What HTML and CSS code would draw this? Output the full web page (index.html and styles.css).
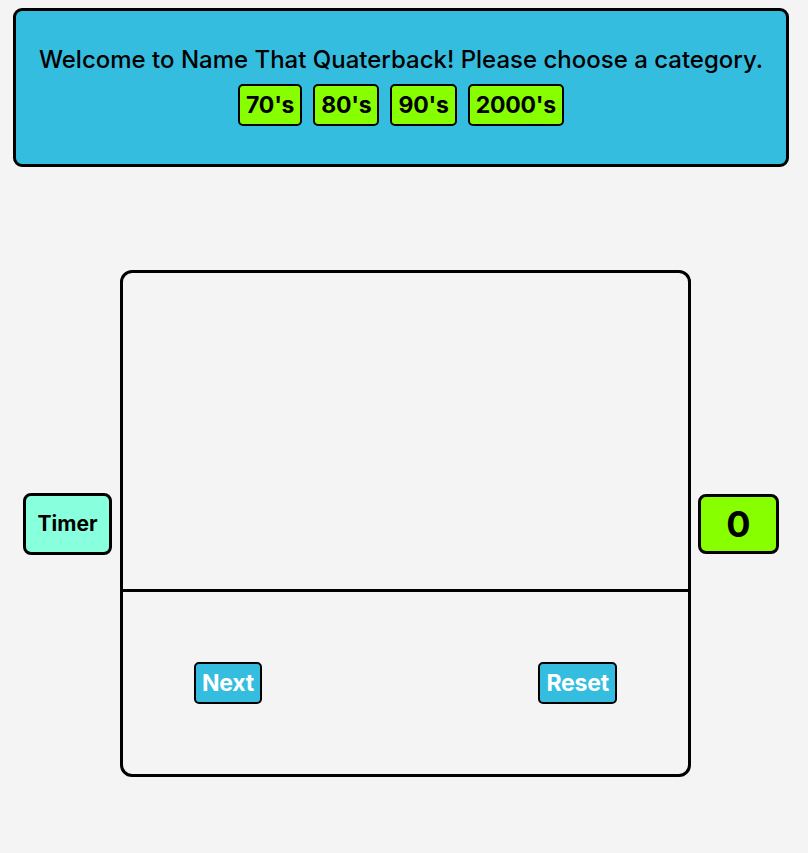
FILE: index.html
```html
<!DOCTYPE html>
<html>
<head>
<meta charset="utf-8">
<link rel="stylesheet" href="styles.css">
</head>
<body>
<header class="banner">
  <h1 class="title">Welcome to Name That Quaterback! Please choose a category.</h1>
  <div class="cats">
    <button class="cat">70's</button>
    <button class="cat">80's</button>
    <button class="cat">90's</button>
    <button class="cat">2000's</button>
  </div>
</header>
<main class="game">
  <div class="timer">Timer</div>
  <section class="board">
    <div class="stage"></div>
    <div class="controls">
      <button class="ctl">Next</button>
      <button class="ctl">Reset</button>
    </div>
  </section>
  <div class="score">0</div>
</main>
</body>
</html>
```

FILE: styles.css
```css
html, body {
  margin: 0;
  padding: 0;
  background: #f4f4f4;
  font-family: Inter, "Noto Sans", sans-serif;
  color: #000;
}
body {
  padding-top: 8px;
}
.banner {
  box-sizing: border-box;
  margin: 0 19px 0 13px;
  height: 159px;
  background: #35bde0;
  border: 3px solid #000;
  border-radius: 9px;
  display: flex;
  flex-direction: column;
  align-items: center;
  padding-top: 33px;
}
.title {
  margin: 0;
  font-size: 24px;
  font-weight: 500;
  line-height: 32px;
  letter-spacing: 0;
}
.cats {
  display: flex;
  gap: 11px;
  margin-top: 8px;
}
.cat {
  font-family: inherit;
  font-size: 23px;
  font-weight: 700;
  background: #88ff00;
  border: 2px solid #000;
  border-radius: 5px;
  height: 42px;
  padding: 0 6px;
  color: #000;
  letter-spacing: -0.2px;
}
.game {
  display: flex;
  align-items: center;
  margin-top: 103px;
  padding-left: 23px;
}
.timer {
  box-sizing: border-box;
  width: 89px;
  height: 62px;
  background: #88ffdd;
  border: 3px solid #000;
  border-radius: 8px;
  display: flex;
  align-items: center;
  justify-content: center;
  font-size: 21px;
  font-weight: 700;
}
.board {
  box-sizing: border-box;
  width: 571px;
  height: 507px;
  margin-left: 8px;
  border: 3px solid #000;
  border-radius: 12px;
  display: flex;
  flex-direction: column;
}
.stage {
  height: 316px;
  border-bottom: 3px solid #000;
}
.controls {
  flex: 1;
  display: flex;
  align-items: center;
  justify-content: space-between;
  padding: 0 71px;
}
.ctl {
  font-family: inherit;
  font-size: 23px;
  font-weight: 700;
  color: #fff;
  background: #35bde0;
  border: 2px solid #000;
  border-radius: 5px;
  height: 42px;
  padding: 0 6px;
  letter-spacing: -0.2px;
}
.score {
  box-sizing: border-box;
  width: 81px;
  height: 60px;
  margin-left: 7px;
  background: #88ff00;
  border: 3px solid #000;
  border-radius: 8px;
  display: flex;
  align-items: center;
  justify-content: center;
  font-size: 36px;
  font-weight: 700;
}
```
